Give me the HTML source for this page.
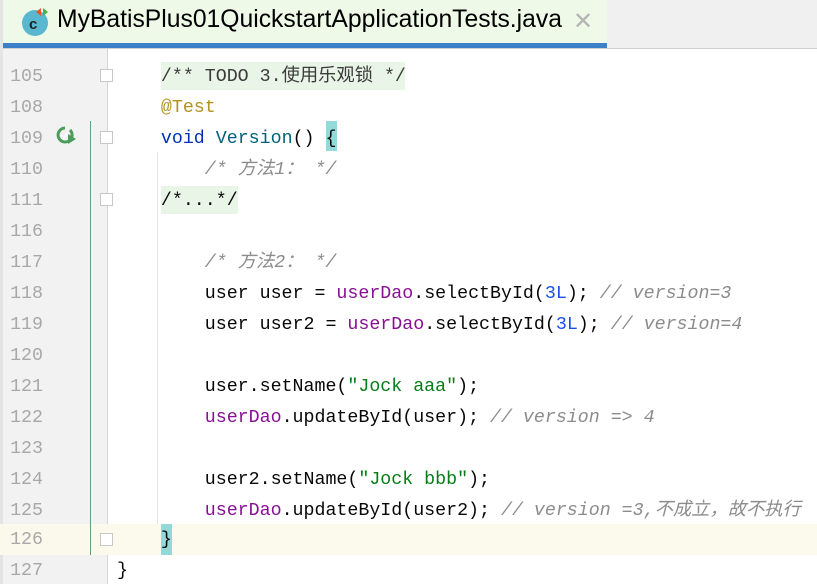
<!DOCTYPE html>
<html><head><meta charset="utf-8"><style>
body{margin:0;width:817px;height:584px;overflow:hidden;background:#fff;position:relative;font-family:"Liberation Mono","Noto Sans CJK SC",monospace}
.tabbar{position:absolute;left:0;top:0;width:817px;height:48px;background:#f0f0f0;border-bottom:1px solid #d0d0d0}
.tab{position:absolute;left:0;top:0;width:607px;height:43px;background:#eff9e7;border-bottom:5px solid #3d80c8}
.tab .t{position:absolute;left:57px;top:6px;font-family:"Liberation Sans","Noto Sans CJK SC",sans-serif;font-size:24.7px;color:#000}
.tab .x{position:absolute;left:573px;top:7px;font-family:"Liberation Sans",sans-serif;font-size:24px;color:#b5b5b5}
.gut{position:absolute;left:3px;top:49px;width:104px;height:535px;background:#f2f2f2;border-right:1px solid #d6d6d6}
.lb{position:absolute;left:0;top:0;width:3px;height:584px;background:#e4e4e4}
.row{position:absolute;left:0;width:817px;height:31px;line-height:31px;font-size:18.3px;white-space:pre}
.num{position:absolute;left:0;width:43px;text-align:right;color:#a8a8a8}
.code{position:absolute;left:117px;color:#080808}
.cm{color:#8c8c8c;font-style:italic}
.kw{color:#0033b3}.an{color:#b3921f}.fn{color:#00627a}.pu{color:#871094}.nu{color:#1750eb}.st{color:#067d17}
.fold{position:absolute;left:100px;width:13px;height:13px;border:1px solid #c8c8c8;background:#fff;box-sizing:border-box}
</style></head><body>
<div class="tabbar"><div class="tab">
<svg style="position:absolute;left:20px;top:5px" width="32" height="32"><circle cx="15" cy="18" r="13" fill="#59b8d0"/><text x="9" y="24" font-family="Liberation Sans" font-size="15" font-weight="bold" fill="#222">c</text><path d="M21 3 L16 7 L21 11Z" fill="#e0572c"/><path d="M23 3 L28 7 L23 11Z" fill="#4caf50"/></svg>
<span class="t">MyBatisPlus01QuickstartApplicationTests.java</span><span class="x">✕</span></div></div>
<div class="lb"></div>
<div class="gut"></div>
<div style="position:absolute;left:0;top:524px;width:817px;height:31px;background:#fbf8ec"></div>
<div style="position:absolute;left:108px;top:524px;width:709px;height:31px;background:#fcfaed"></div>
<div style="position:absolute;left:90px;top:121px;width:1px;height:434px;background:#5f9f8c"></div>
<div style="position:absolute;left:157px;top:152px;width:1px;height:372px;background:#e6e6e6"></div>
<div style="position:absolute;left:161px;top:62px;width:244px;height:28px;background:#e9f5e6"></div>
<div style="position:absolute;left:161px;top:186px;width:77px;height:28px;background:#e9f5e6"></div>
<div style="position:absolute;left:326px;top:121px;width:11px;height:30px;background:#93d9d9"></div>
<div style="position:absolute;left:161px;top:524px;width:11px;height:31px;background:#93d9d9"></div>
<div class="fold" style="top:69px"></div><div class="fold" style="top:131px"></div><div class="fold" style="top:193px"></div><div class="fold" style="top:533px"></div>
<svg style="position:absolute;left:56px;top:126px" width="22" height="20"><path d="M9 2a7 7 0 1 0 5 2" stroke="#4a9d5b" stroke-width="3" fill="none"/><path d="M5 9l3 3 5-6" stroke="#fff" stroke-width="2" fill="none"/><path d="M12 8l8 5-8 5z" fill="#4a9d5b"/></svg>
<div class="row" style="top:62px"><span class="num">105</span><span class="code">    <span style="color:#3b3b3b">/** TODO 3.使用乐观锁 */</span></span></div>
<div class="row" style="top:93px"><span class="num">108</span><span class="code">    <span class="an">@Test</span></span></div>
<div class="row" style="top:124px"><span class="num">109</span><span class="code">    <span class="kw">void</span> <span class="fn">Version</span>() {</span></div>
<div class="row" style="top:155px"><span class="num">110</span><span class="code">        <span class="cm">/* 方法1： */</span></span></div>
<div class="row" style="top:186px"><span class="num">111</span><span class="code">    /*...*/</span></div>
<div class="row" style="top:217px"><span class="num">116</span></div>
<div class="row" style="top:248px"><span class="num">117</span><span class="code">        <span class="cm">/* 方法2： */</span></span></div>
<div class="row" style="top:279px"><span class="num">118</span><span class="code">        user user = <span class="pu">userDao</span>.selectById(<span class="nu">3L</span>); <span class="cm">// version=3</span></span></div>
<div class="row" style="top:310px"><span class="num">119</span><span class="code">        user user2 = <span class="pu">userDao</span>.selectById(<span class="nu">3L</span>); <span class="cm">// version=4</span></span></div>
<div class="row" style="top:341px"><span class="num">120</span></div>
<div class="row" style="top:372px"><span class="num">121</span><span class="code">        user.setName(<span class="st">"Jock aaa"</span>);</span></div>
<div class="row" style="top:403px"><span class="num">122</span><span class="code">        <span class="pu">userDao</span>.updateById(user); <span class="cm">// version =&gt; 4</span></span></div>
<div class="row" style="top:434px"><span class="num">123</span></div>
<div class="row" style="top:465px"><span class="num">124</span><span class="code">        user2.setName(<span class="st">"Jock bbb"</span>);</span></div>
<div class="row" style="top:496px"><span class="num">125</span><span class="code">        <span class="pu">userDao</span>.updateById(user2); <span class="cm">// version =3,不成立，故不执行</span></span></div>
<div class="row" style="top:525px"><span class="num">126</span><span class="code">    }</span></div>
<div class="row" style="top:556px"><span class="num">127</span><span class="code">}</span></div>
</body></html>
